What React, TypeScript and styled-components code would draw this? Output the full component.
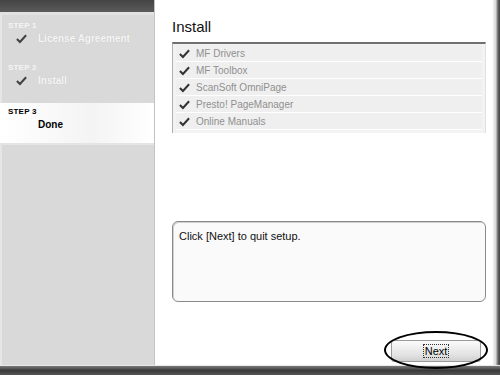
import React from 'react';
import styled, { createGlobalStyle } from 'styled-components';

const GlobalStyle = createGlobalStyle`
  html, body {
    margin: 0;
    padding: 0;
    background: #ffffff;
  }
  body {
    font-family: "Liberation Sans", Arial, sans-serif;
  }
`;

interface Step {
  label: string;
  title: string;
  done: boolean;
}

const steps: Step[] = [
  { label: 'STEP 1', title: 'License Agreement', done: true },
  { label: 'STEP 2', title: 'Install', done: true },
  { label: 'STEP 3', title: 'Done', done: false },
];

const items = ['MF Drivers', 'MF Toolbox', 'ScanSoft OmniPage', 'Presto! PageManager', 'Online Manuals'];

const Check: React.FC<{ size?: number; color?: string }> = ({ size = 12, color = '#3a3a3a' }) => (
  <svg width={size} height={size} viewBox="0 0 12 12">
    <path d="M1 6.5 L4.3 9.8 L11 2.5" fill="none" stroke={color} strokeWidth="2.2" strokeLinejoin="miter" />
  </svg>
);

const App: React.FC = () => {
  return (
    <>
      <GlobalStyle />
      <Frame>
        <Body>
          <Sidebar>
            <SideTop />
            <StepList>
              {steps.map((s) => (
                <StepRow key={s.label} current={!s.done}>
                  <StepLabel current={!s.done}>{s.label}</StepLabel>
                  <StepLine>
                    <CheckSlot>{s.done && <Check size={11} color="#404040" />}</CheckSlot>
                    <StepTitle current={!s.done}>{s.title}</StepTitle>
                  </StepLine>
                </StepRow>
              ))}
            </StepList>
          </Sidebar>

          <Main>
            <Title>Install</Title>
            <ItemList>
              {items.map((it) => (
                <ItemRow key={it}>
                  <Check size={11} color="#333" />
                  <ItemText>{it}</ItemText>
                </ItemRow>
              ))}
            </ItemList>
            <Spacer />
            <MessageBox>Click [Next] to quit setup.</MessageBox>
            <Footer>
              <ButtonWrap>
                <NextButton>
                  <Focus>Next</Focus>
                </NextButton>
                <Circle />
              </ButtonWrap>
            </Footer>
          </Main>

          <RightEdge />
        </Body>
        <BottomBar />
      </Frame>
    </>
  );
};

const Frame = styled.div`
  width: 500px;
  height: 375px;
  display: grid;
  grid-template-rows: 1fr 10px;
  overflow: hidden;
`;

const Body = styled.div`
  display: grid;
  grid-template-columns: 155px 1fr 7px;
  min-height: 0;
`;

const Sidebar = styled.div`
  background: #d9d9d9;
  border-right: 1px solid #c4c4c4;
  display: flex;
  flex-direction: column;
  box-shadow: inset 2px 0 0 #e6e6e6;
`;

const SideTop = styled.div`
  height: 12px;
  background: linear-gradient(#444, #5a5a5a);
  border-bottom: 3px solid #e2e2e2;
`;

const StepList = styled.div`
  display: flex;
  flex-direction: column;
  padding-top: 4px;
`;

const StepRow = styled.div<{ current?: boolean }>`
  height: 42px;
  padding: ${(p) => (p.current ? '4px 0 0 8px' : '2px 0 0 8px')};
  box-sizing: border-box;
  background: ${(p) => (p.current ? 'linear-gradient(90deg, #ffffff 0%, #f4f4f4 60%, #ffffff 100%)' : 'transparent')};
  border-bottom: ${(p) => (p.current ? '2px solid #e4e4e4' : 'none')};
  display: flex;
  flex-direction: column;
`;

const StepLabel = styled.div<{ current?: boolean }>`
  font-size: 8px;
  font-weight: bold;
  color: ${(p) => (p.current ? '#000' : '#f4f4f4')};
  letter-spacing: 0.2px;
`;

const StepLine = styled.div`
  display: flex;
  align-items: center;
  margin-top: 2px;
`;

const CheckSlot = styled.div`
  width: 30px;
  height: 12px;
  display: flex;
  align-items: center;
  padding-left: 8px;
  box-sizing: border-box;
`;

const StepTitle = styled.div<{ current?: boolean }>`
  font-size: 10px;
  font-weight: bold;
  color: ${(p) => (p.current ? '#000' : '#f6f6f6')};
  text-shadow: ${(p) => (p.current ? 'none' : '0 0 1px #bdbdbd')};
`;

const Main = styled.div`
  background: #ffffff;
  display: flex;
  flex-direction: column;
  padding: 18px 7px 0 17px;
  min-height: 0;
`;

const Title = styled.div`
  font-size: 15px;
  color: #111;
  height: 24px;
`;

const ItemList = styled.div`
  border-top: 2px solid #707070;
  border-left: 1px solid #b0b0b0;
  border-right: 1px solid #e0e0e0;
  background: #f3f3f3;
  padding: 1px 3px 3px 3px;
  display: flex;
  flex-direction: column;
`;

const ItemRow = styled.div`
  height: 16px;
  border-bottom: 1px solid #ffffff;
  background: #efefef;
  display: flex;
  align-items: center;
  gap: 6px;
  padding-left: 3px;
`;

const ItemText = styled.span`
  font-size: 10px;
  color: #8f8f8f;
`;

const Spacer = styled.div`
  flex: 1;
`;

const MessageBox = styled.div`
  height: 81px;
  border: 1px solid #8a8a8a;
  border-radius: 6px;
  background: #fafafa;
  padding: 8px 6px;
  box-sizing: border-box;
  font-size: 11px;
  color: #111;
  box-shadow: inset 1px 1px 0 #d0d0d0;
`;

const Footer = styled.div`
  height: 60px;
  display: flex;
  justify-content: flex-end;
  align-items: flex-end;
  padding-bottom: 3px;
`;

const ButtonWrap = styled.div`
  position: relative;
  margin-right: 5px;
`;

const NextButton = styled.div`
  width: 88px;
  height: 20px;
  border: 1px solid #9a9a9a;
  border-radius: 3px;
  background: linear-gradient(#fbfbfb, #e2e2e2 70%, #cfcfcf);
  display: flex;
  align-items: center;
  justify-content: center;
  font-size: 11px;
  color: #000;
`;

const Focus = styled.span`
  border: 1px dotted #333;
  padding: 0 1px;
  line-height: 12px;
`;

const Circle = styled.div`
  position: absolute;
  left: -7px;
  top: -9px;
  width: 100px;
  height: 34px;
  border: 2px solid #000;
  border-radius: 50%;
  pointer-events: none;
`;

const RightEdge = styled.div`
  background: linear-gradient(90deg, #f0f0f0 0%, #d8d8d8 40%, #6a6a6a 70%, #404040 100%);
`;

const BottomBar = styled.div`
  background: linear-gradient(#7a7a7a, #3a3a3a 50%, #555);
  border-top: 1px solid #e8e8e8;
`;

export default App;
